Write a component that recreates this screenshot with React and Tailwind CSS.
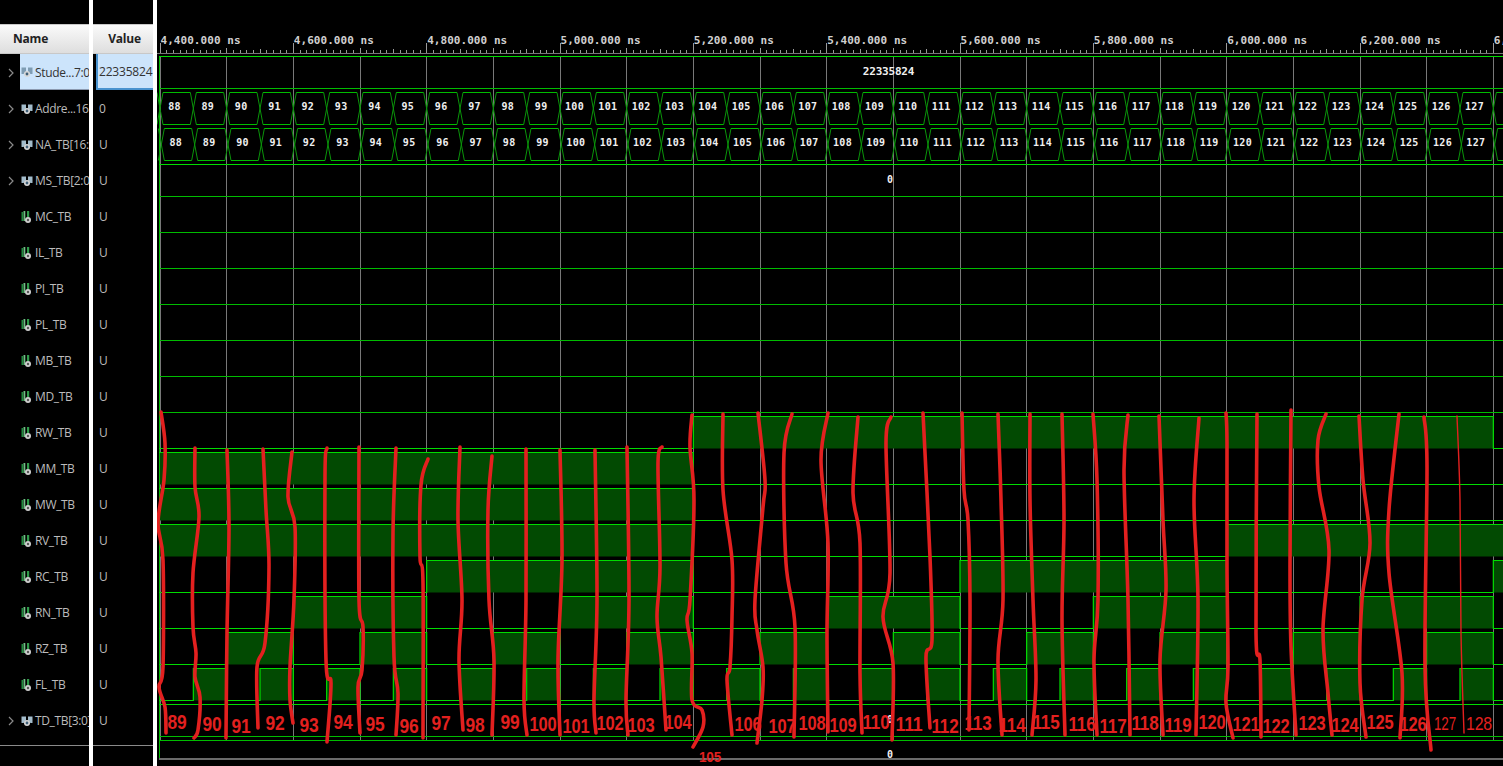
const rows = [
  { name: "Stude...7:0", value: "22335824", bus: true, selected: true },
  { name: "Addre...16", value: "0", bus: true },
  { name: "NA_TB[16:0", value: "U", bus: true },
  { name: "MS_TB[2:0]", value: "U", bus: true },
  { name: "MC_TB", value: "U" },
  { name: "IL_TB", value: "U" },
  { name: "PI_TB", value: "U" },
  { name: "PL_TB", value: "U" },
  { name: "MB_TB", value: "U" },
  { name: "MD_TB", value: "U" },
  { name: "RW_TB", value: "U" },
  { name: "MM_TB", value: "U" },
  { name: "MW_TB", value: "U" },
  { name: "RV_TB", value: "U" },
  { name: "RC_TB", value: "U" },
  { name: "RN_TB", value: "U" },
  { name: "RZ_TB", value: "U" },
  { name: "FL_TB", value: "U" },
  { name: "TD_TB[3:0]", value: "U", bus: true },
];

const STEP = 100 / 3; // 50 ns of sim time
const X0 = 160;
const GREEN = "#00bc00";
const BRIGHT = "#00dc00";
const FILL = "#024a02";
const END = 41;

const xAt = (k) => X0 + k * STEP;
const topOf = (row) => 56.5 + 36 * row;
const bottomOf = (row) => 88.5 + 36 * row;

function every(period, first, last) {
  const out = [];
  for (let k = first; k < last; k += period * 2) out.push([k, Math.min(k + period, last)]);
  return out;
}

// [row, ranges where the signal is high]
const bits = [
  [10, [[16, 40]]],
  [11, [[0, 16]]],
  [12, [[0, 16]]],
  [13, [[0, 16], [32, END]]],
  [14, [[8, 16], [24, 32], [40, END]]],
  [15, every(4, 4, 40)],
  [16, every(2, 2, 40)],
  [17, every(1, 1, 40)],
];

const redLines = [
  [[161,412],[165,443],[164,480],[158,523],[163,560],[163,667],[159,687],[165,707],[166,733]],
  [[195,448],[195,487],[199,517],[193,573],[193,627],[196,653],[195,677],[200,697],[198,730],[194,738]],
  [[227,450],[229,527],[227,633],[226,738]],
  [[263,449],[266,510],[269,567],[265,643],[257,667],[258,728]],
  [[292,452],[288,497],[295,527],[294,600],[290,667],[290,700],[293,723]],
  [[327,448],[325,477],[326,660],[331,683],[327,742]],
  [[359,447],[359,600],[363,627],[362,670],[358,687],[360,733]],
  [[396,448],[393,533],[394,657],[398,693],[396,735]],
  [[428,459],[421,485],[420,557],[423,583],[423,738]],
  [[460,447],[458,520],[462,600],[459,660],[463,730]],
  [[492,456],[488,510],[489,600],[494,660],[492,735]],
  [[526,449],[526,600],[524,700],[527,735]],
  [[560,450],[562,560],[558,660],[560,735]],
  [[595,450],[597,600],[594,700],[596,733]],
  [[627,447],[629,600],[626,700],[628,735]],
  [[662,447],[658,463],[660,567],[657,617],[661,657],[666,730]],
  [[692,415],[690,447],[694,500],[690,600],[687,620],[692,653],[692,700],[702,710],[703,727],[693,747]],
  [[723,414],[723,490],[732,560],[732,617],[730,667],[727,680],[732,735]],
  [[758,413],[765,480],[763,507],[755,600],[757,630],[763,667],[762,700],[757,743]],
  [[792,414],[784,453],[786,563],[795,627],[794,737]],
  [[828,413],[821,460],[828,543],[827,633],[828,732]],
  [[858,417],[853,493],[860,543],[860,673],[862,733]],
  [[891,417],[886,443],[890,573],[883,617],[893,663],[892,740]],
  [[923,413],[930,557],[932,640],[926,657],[930,728]],
  [[962,413],[964,490],[968,520],[970,600],[969,730]],
  [[998,414],[1001,500],[1003,600],[998,660],[1002,735]],
  [[1030,414],[1030,500],[1033,600],[1036,680],[1032,735]],
  [[1062,414],[1064,520],[1062,620],[1065,735]],
  [[1093,414],[1097,480],[1098,600],[1094,660],[1097,735]],
  [[1128,415],[1124,470],[1128,600],[1130,735]],
  [[1159,416],[1163,520],[1166,590],[1160,660],[1163,735]],
  [[1199,418],[1194,500],[1198,600],[1196,735]],
  [[1226,413],[1227,443],[1227,567],[1228,667],[1226,703],[1233,738]],
  [[1257,414],[1256,633],[1260,660],[1261,737]],
  [[1291,410],[1290,567],[1291,647],[1296,735]],
  [[1326,414],[1318,440],[1319,487],[1329,550],[1323,630],[1328,693],[1332,735]],
  [[1359,416],[1363,480],[1370,543],[1362,600],[1360,683],[1366,737]],
  [[1399,414],[1389,510],[1389,573],[1402,673],[1400,738]],
  [[1424,417],[1427,467],[1425,667],[1431,750]],
];
const thinLine = [[1457,416],[1460,500],[1461,633],[1464,733]];

const notes = [
  ["89",177],["90",212],["91",241],["92",275],["93",309],["94",343],["95",375],["96",409],["97",441],["98",475],
  ["99",510],["100",543],["101",576],["102",610],["103",641],["104",678],["106",748],["107",782],["108",812],["109",843],
  ["110",876],["111",909],["112",945],["113",978],["114",1012],["115",1046],["116",1082],["117",1113],["118",1145],["119",1178],
  ["120",1212],["121",1246],["122",1276],["123",1312],["124",1345],["125",1380],["126",1413],
];

// smooth line through hand-drawn points
function smooth(pts) {
  let d = `M${pts[0][0]} ${pts[0][1]}`;
  for (let i = 0; i < pts.length - 1; i++) {
    const p0 = pts[i - 1] || pts[i];
    const p1 = pts[i];
    const p2 = pts[i + 1];
    const p3 = pts[i + 2] || p2;
    const c1x = p1[0] + (p2[0] - p0[0]) / 6;
    const c1y = p1[1] + (p2[1] - p0[1]) / 6;
    const c2x = p2[0] - (p3[0] - p1[0]) / 6;
    const c2y = p2[1] - (p3[1] - p1[1]) / 6;
    d += ` C${c1x} ${c1y} ${c2x} ${c2y} ${p2[0]} ${p2[1]}`;
  }
  return d;
}

function bitPath(row, ranges) {
  const top = topOf(row);
  const bot = bottomOf(row);
  let d = `M${X0 - 1} ${ranges[0][0] === 0 ? top : bot}`;
  ranges.forEach(([a, b]) => {
    if (a > 0) d += ` L${xAt(a)} ${bot} L${xAt(a)} ${top}`;
    d += ` L${xAt(b)} ${top}`;
    if (b < END) d += ` L${xAt(b)} ${bot}`;
  });
  const last = ranges[ranges.length - 1][1];
  if (last < END) d += ` L${xAt(END)} ${bot}`;
  return d;
}

function BusCells({ row, shift }) {
  const top = topOf(row);
  const bot = bottomOf(row);
  const cells = [];
  for (let k = 0; k < 41; k++) {
    const a = xAt(k) + shift;
    const b = xAt(k + 1) + shift;
    cells.push(
      <g key={k}>
        <path d={`M${a - 3} ${top} L${a + 3} ${bot} M${a + 3} ${top} L${a - 3} ${bot}`} stroke="#0a960a" fill="none" />
        <path d={`M${a + 3} ${top} L${b - 3} ${top} M${a + 3} ${bot} L${b - 3} ${bot}`} stroke={GREEN} fill="none" />
        {k < 40 && (
          <text x={a + 14.5} y={top + 17.5} textAnchor="middle" fill="#f0f0f0" fontSize="10" fontWeight="700" letterSpacing="0.3" fontFamily="'DejaVu Sans Mono', monospace">
            {88 + k}
          </text>
        )}
      </g>
    );
  }
  return <g>{cells}</g>;
}

function Flat({ row, label, x = 890, size = 10 }) {
  return (
    <g>
      <line x1="159" x2="1503" y1={topOf(row)} y2={topOf(row)} stroke={BRIGHT} />
      <line x1="159" x2="1503" y1={bottomOf(row)} y2={bottomOf(row)} stroke={GREEN} />
      <text x={x} y={topOf(row) + 18.5} textAnchor="middle" fill="#f0f0f0" fontSize={size} fontWeight="700" fontFamily="'DejaVu Sans Mono', monospace">
        {label}
      </text>
    </g>
  );
}

function Ruler() {
  const ticks = [];
  for (let i = 0; i <= 200; i++) {
    const x = X0 + (i * 20) / 3;
    let y1 = 50;
    if (i % 5 === 0) y1 = 49;
    if (i % 10 === 0) y1 = 48;
    if (i % 20 === 0) y1 = 43;
    ticks.push(<line key={i} x1={x} x2={x} y1={y1} y2="54" stroke="#9a9a9a" shapeRendering="crispEdges" />);
  }
  const labels = [];
  for (let i = 0; i <= 10; i++) {
    const t = 4400 + i * 200;
    const text = `${Math.floor(t / 1000)},${String(t % 1000).padStart(3, "0")}.000 ns`;
    labels.push(
      <text key={t} x={X0 + (i * 400) / 3 + 0.5} y="44" fill="#d0d0d0" fontSize="11" fontWeight="700" letterSpacing="0.05" fontFamily="'DejaVu Sans Mono', monospace">
        {text}
      </text>
    );
  }
  return (
    <g>
      {ticks}
      <line x1="157" x2="1503" y1="53.5" y2="53.5" stroke="#777" />
      {labels}
    </g>
  );
}

function Wave() {
  const grid = [];
  for (let i = 0; i <= 20; i++) {
    const x = X0 + (i * 200) / 3;
    grid.push(<line key={i} x1={x} x2={x} y1="56" y2="740" stroke="#787878" shapeRendering="crispEdges" />);
  }
  const lowRows = [4, 5, 6, 7, 8, 9];
  return (
    <svg viewBox="157 0 1346 766" className="block w-full h-full">
      <Ruler />
      {grid}
      <line x1="159.5" x2="159.5" y1="56" y2="759" stroke={GREEN} />

      <Flat row={0} label="22335824" x={888.5} size={11} />
      <BusCells row={1} shift={0} />
      <BusCells row={2} shift={1.33} />
      <Flat row={3} label="0" />
      {lowRows.map((r) => (
        <line key={r} x1="159" x2="1503" y1={bottomOf(r)} y2={bottomOf(r)} stroke={GREEN} />
      ))}

      {bits.map(([row, ranges]) => (
        <g key={row}>
          {ranges.map(([a, b]) => (
            <rect key={a} x={xAt(a)} y={topOf(row)} width={(b - a) * STEP} height="32" fill={FILL} />
          ))}
          <path d={bitPath(row, ranges)} fill="none" stroke={BRIGHT} strokeWidth="1.2" />
        </g>
      ))}

      <Flat row={18} label="0" />
      <line x1="159" x2="1503" y1="740.5" y2="740.5" stroke={GREEN} />
      <line x1="159" x2="1503" y1="759" y2="759" stroke="#6a6a6a" strokeWidth="2" />
      <text x="890" y="758" textAnchor="middle" fill="#f0f0f0" fontSize="10" fontWeight="700" fontFamily="'DejaVu Sans Mono', monospace">0</text>

      {/* pen marks someone drew over the capture */}
      <g fill="none" stroke="#e3201f" strokeWidth="3.6" strokeLinecap="round" strokeLinejoin="round">
        {redLines.map((pts, i) => (
          <path key={i} d={smooth(pts)} />
        ))}
        <path d={smooth(thinLine)} strokeWidth="1.4" />
      </g>
      <g fill="#e3201f" fontFamily="'Liberation Sans', sans-serif" fontWeight="700" fontSize="20" textAnchor="middle">
        {notes.map(([n, x], i) => (
          <text key={n} x={x} y={731 + ((i * 7) % 5) - 2} textLength={n.length === 3 ? 27 : 19} lengthAdjust="spacingAndGlyphs">
            {n}
          </text>
        ))}
        <text x="710" y="762" fontSize="15" textLength="22" lengthAdjust="spacingAndGlyphs">105</text>
        <text x="1445" y="730" fontSize="18" fontWeight="400" textLength="22" lengthAdjust="spacingAndGlyphs">127</text>
        <text x="1479" y="730" fontSize="19" fontWeight="400" textLength="26" lengthAdjust="spacingAndGlyphs">128</text>
      </g>
    </svg>
  );
}

function BusIcon({ selected }) {
  const tab = selected ? "#7f9db4" : "#a3bccb";
  return (
    <svg width="12" height="11" viewBox="0 0 12 11" className="shrink-0">
      <path d="M0.5 0.5h4.5v4l-2.5 2.5h-2z M7 0.5h4.5v6.5h-2l-2.5-2.5z" fill={tab} />
      <circle cx="6" cy="7" r="3" fill="#d8d8d8" />
      <circle cx="6" cy="7" r="1.4" fill="#3f5f78" />
    </svg>
  );
}

function WireIcon() {
  return (
    <svg width="11" height="13" viewBox="0 0 11 13" className="shrink-0">
      <path d="M0.5 1h1.5v9H0.5z" fill="#1f8a3c" />
      <path d="M2.5 0h1.8v10H2.5z" fill="#6fbf84" />
      <path d="M6 0h2.2v6.5H6z" fill="#2f9a4a" />
      <circle cx="7" cy="9" r="3" fill="#cfcfcf" />
      <circle cx="7" cy="9" r="1.2" fill="#555" />
    </svg>
  );
}

function Chevron() {
  return (
    <svg width="6" height="10" viewBox="0 0 6 10" className="shrink-0">
      <path d="M1 1l4 4-4 4" fill="none" stroke="#8a8a8a" strokeWidth="1.2" />
    </svg>
  );
}

function ColumnHeader({ children, className }) {
  return (
    <div className={`h-[30px] flex items-center bg-gradient-to-b from-[#fafafa] to-[#dedede] border-y border-[#c8c8c8] text-[12px] font-bold text-[#222] ${className}`}>
      {children}
    </div>
  );
}

function NameRow({ row }) {
  return (
    <div className="h-9 flex items-center">
      <div className="w-[20px] h-full shrink-0 flex items-center pl-[8px] pt-[2px]">{row.bus && <Chevron />}</div>
      <div className={`flex-1 min-w-0 h-full flex items-center pl-[1px] pt-[2px] overflow-hidden ${row.selected ? "bg-[#cce4fb] border-b border-[#8c9ab0] text-[#333]" : "text-[#bcbcbc]"}`}>
        {row.bus ? <BusIcon selected={row.selected} /> : <WireIcon />}
        <span className={`whitespace-nowrap tracking-[-0.35px] ${row.bus ? "ml-[2px]" : "ml-[3px]"}`}>{row.name}</span>
      </div>
    </div>
  );
}

function ValueRow({ row }) {
  if (row.selected) {
    return (
      <div className="h-9 flex items-center ml-[3px] pl-[1px] pt-[2px] bg-[#cce4fb] border-l-2 border-b-2 border-[#4a93cf] text-[#333] whitespace-nowrap overflow-hidden">
        {row.value}
      </div>
    );
  }
  return <div className="h-9 flex items-center pl-[6px] pt-[2px] text-[#bcbcbc]">{row.value}</div>;
}

export default function App() {
  return (
    <div className="w-[1503px] h-[766px] flex bg-black overflow-hidden font-['Open_Sans',sans-serif] text-[12px] tracking-[-0.2px]">
      <div className="w-[89px] shrink-0 flex flex-col pt-[24px]">
        <ColumnHeader className="pl-[13px]">Name</ColumnHeader>
        {rows.map((r) => (
          <NameRow key={r.name} row={r} />
        ))}
        <div className="mt-[7px] border-t border-[#8a8a8a]" />
      </div>
      <div className="w-[4px] shrink-0 bg-white" />
      <div className="w-[60px] shrink-0 flex flex-col pt-[24px]">
        <ColumnHeader className="justify-center pl-[3px]">Value</ColumnHeader>
        {rows.map((r) => (
          <ValueRow key={r.name} row={r} />
        ))}
        <div className="mt-[7px] border-t border-[#8a8a8a]" />
      </div>
      <div className="w-[4px] shrink-0 bg-white" />
      <div className="flex-1 min-w-0 h-full">
        <Wave />
      </div>
    </div>
  );
}
